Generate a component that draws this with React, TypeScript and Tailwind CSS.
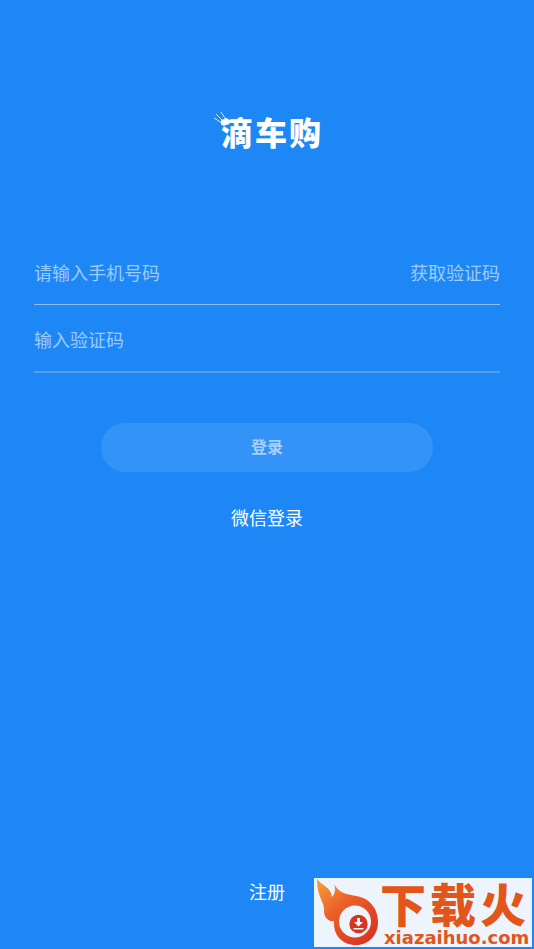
import { useState } from 'react'

const cjk = "font-['Noto_Sans_CJK_SC',sans-serif]"

function BrandLogo() {
  return (
    <h1 className="relative flex gap-[2px] pl-2 text-[32px] leading-10 font-black">
      <svg viewBox="0 0 16 16" className="absolute top-0 left-0 size-4" fill="none" stroke="white" strokeWidth="0.8">
        <path d="M1 7l8 5M3 3l7 7M8 1l5 8" />
        <circle cx="11" cy="11.5" r="3.2" fill="white" stroke="none" />
      </svg>
      <span>滴</span>
      <span>车</span>
      <span>购</span>
    </h1>
  )
}

function FlameIcon() {
  return (
    <svg viewBox="0 0 66 69" className="w-[66px] shrink-0" aria-hidden="true">
      <defs>
        <linearGradient id="flame" x1="0" y1="0" x2="0.8" y2="1">
          <stop offset="0" stopColor="#f6a03a" />
          <stop offset="0.45" stopColor="#ea5f28" />
          <stop offset="1" stopColor="#d93420" />
        </linearGradient>
      </defs>
      <path
        fill="url(#flame)"
        d="M3 1C7 7 17 9 18 19C21 16 22 11 20 6C25 15 32 16 42 18C56 20 64 31 64 44C64 57 55 67 42 67C28 67 19 57 20 43C14 44 10 39 10 33C11 24 3 20 3 1Z"
      />
      <circle cx="41" cy="43.5" r="16" fill="#edf4fb" />
      <circle cx="44.5" cy="46" r="9.2" fill="#d93420" />
      <path d="M43 40h3v4h3l-4.5 4.5L40 44h3zM39.5 50h10v1.5h-10z" fill="#edf4fb" />
    </svg>
  )
}

function Watermark() {
  return (
    <aside className="absolute right-[2px] bottom-[2px] flex h-[69px] w-[218px] bg-[#edf4fb] text-[#e2561b]">
      <FlameIcon />
      <div className="flex flex-col">
        <div className="flex gap-[4px] text-[46px] leading-[48px] font-black">
          <span>下</span>
          <span>载</span>
          <span>火</span>
        </div>
        <div className="pl-1 font-['DejaVu_Sans',sans-serif] text-[18px] leading-6 font-bold">xiazaihuo.com</div>
      </div>
    </aside>
  )
}

export default function App() {
  const [phone, setPhone] = useState('')
  const [code, setCode] = useState('')

  return (
    <main className={`relative flex min-h-screen flex-col bg-[#1d87f5] text-[18px] leading-6 text-white ${cjk}`}>
      <header className="flex justify-center pt-[111px]">
        <BrandLogo />
      </header>

      <form className="flex flex-col px-[34px] pt-[86px]" onSubmit={(e) => e.preventDefault()}>
        <div className="flex h-[68px] items-center border-b border-[#8fc0ee] pt-[2px]">
          <input
            type="tel"
            aria-label="手机号码"
            placeholder="请输入手机号码"
            value={phone}
            onChange={(e) => setPhone(e.target.value)}
            className="min-w-0 flex-1 outline-none placeholder:text-[#9dcbfb]"
          />
          <button type="button" className="text-[#9dcbfb]">
            获取验证码
          </button>
        </div>
        <div className="flex h-[68px] items-center border-b-2 border-[#559fef] pt-[2px]">
          <input
            type="text"
            aria-label="验证码"
            placeholder="输入验证码"
            value={code}
            onChange={(e) => setCode(e.target.value)}
            className="min-w-0 flex-1 outline-none placeholder:text-[#9dcbfb]"
          />
        </div>
        <button
          type="submit"
          className="mx-[67px] mt-[50px] h-[49px] rounded-[24px] bg-[#3393f7] pb-[3px] text-[16px] font-bold text-[#a5d0fc]"
        >
          登录
        </button>
      </form>

      <button type="button" className="mt-[33px] self-center">
        微信登录
      </button>
      <a href="#register" className="mt-auto mb-[46px] self-center">
        注册
      </a>

      <Watermark />
    </main>
  )
}
